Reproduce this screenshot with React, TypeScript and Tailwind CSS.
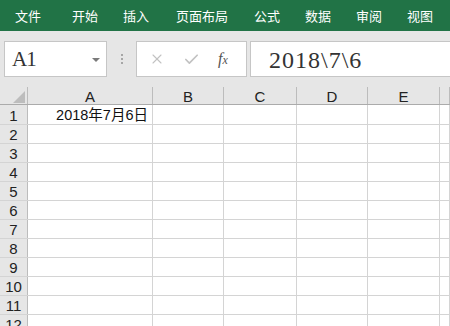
import { X, Check } from "lucide-react";

const menus = [
  { label: "文件", ml: "ml-[15px]" },
  { label: "开始", ml: "ml-[31px]" },
  { label: "插入", ml: "ml-[25px]" },
  { label: "页面布局", ml: "ml-[27px]" },
  { label: "公式", ml: "ml-[26px]" },
  { label: "数据", ml: "ml-[25px]" },
  { label: "审阅", ml: "ml-[25px]" },
  { label: "视图", ml: "ml-[25px]" },
];

const cols = [
  { name: "A", w: "w-[125px]" },
  { name: "B", w: "w-[71px]" },
  { name: "C", w: "w-[73px]" },
  { name: "D", w: "w-[71px]" },
  { name: "E", w: "w-[72px]" },
  { name: "", w: "flex-1" },
];

const rows = [1, 2, 3, 4, 5, 6, 7, 8, 9, 10, 11, 12];

const sans = "font-['Liberation_Sans','Noto_Sans_CJK_SC',sans-serif]";

const App = () => {
  return (
    <div className="w-[450px] h-[326px] overflow-hidden bg-white flex flex-col">
      {/* ribbon tabs */}
      <div className="h-[31px] shrink-0 bg-[#217346] flex items-center text-white text-[13px] font-['Noto_Sans_CJK_SC',sans-serif]">
        {menus.map((m) => (
          <span key={m.label} className={`${m.ml} whitespace-nowrap`}>
            {m.label}
          </span>
        ))}
      </div>

      {/* formula bar */}
      <div className="h-[56px] shrink-0 bg-[#e6e6e6] flex items-start pt-[10px] pl-[4px]">
        <div className="w-[103px] h-[36px] bg-white border border-[#c6c6c6] flex items-center justify-between pl-[7px] pr-[6px]">
          <span className="text-[21px] tracking-[-1px] text-[#333] font-['Liberation_Serif',serif] pt-[2px]">A1</span>
          <svg width="8" height="5" viewBox="0 0 8 5" className="mt-[2px]">
            <polygon points="0,0 8,0 4,4" fill="#7a7a7a" />
          </svg>
        </div>
        <div className="w-[29px] h-[36px] flex flex-col items-center justify-center gap-[2px]">
          <span className="w-[2px] h-[2px] bg-[#a6a6a6]" />
          <span className="w-[2px] h-[2px] bg-[#a6a6a6]" />
          <span className="w-[2px] h-[2px] bg-[#a6a6a6]" />
        </div>
        <div className="w-[111px] h-[36px] bg-white border border-[#c6c6c6] flex items-center pl-[12px]">
          <X className="w-[16px] h-[16px] text-[#c2c2c2]" strokeWidth={1.6} />
          <Check className="w-[17px] h-[17px] ml-[18px] text-[#c2c2c2]" strokeWidth={2.4} />
          <span className="ml-[18px] text-[16px] italic text-[#555] font-['Liberation_Serif',serif] leading-none">
            f<span className="text-[12px]">x</span>
          </span>
        </div>
        <div className="flex-1 h-[36px] ml-[3px] -mr-[2px] bg-white border border-[#c6c6c6] flex items-center pl-[18px]">
          <span className="text-[24px] tracking-[1px] text-[#333] font-['Liberation_Serif',serif] pt-[2px]">
            2018\7\6
          </span>
        </div>
      </div>

      {/* column headers */}
      <div className={`h-[18px] shrink-0 flex bg-[#e6e6e6] border-b border-[#ababab] text-[15px] text-[#222] ${sans}`}>
        <div className="w-[28px] shrink-0 border-r border-[#bcbcbc] flex items-end justify-end pr-[2px] pb-[1px]">
          <svg width="12" height="12" viewBox="0 0 12 12">
            <polygon points="12,0 12,12 0,12" fill="#bdbdbd" />
          </svg>
        </div>
        {cols.map((c, i) => (
          <div
            key={i}
            className={`${c.w} shrink-0 border-r border-[#bcbcbc] flex items-center justify-center leading-none pt-[1px]`}
          >
            {c.name}
          </div>
        ))}
      </div>

      {/* grid */}
      {rows.map((r) => (
        <div
          key={r}
          className={`${r === 1 ? "h-[20px]" : "h-[19px]"} shrink-0 flex border-b border-[#d4d4d4] ${sans}`}
        >
          <div className="w-[28px] shrink-0 bg-[#e6e6e6] border-r border-[#bcbcbc] flex items-end justify-center text-[15px] leading-[15px] pb-[1px] text-[#222]">
            {r}
          </div>
          {cols.map((c, i) => (
            <div
              key={i}
              className={`${c.w} shrink-0 border-r border-[#d4d4d4] flex items-end justify-end pr-[4px] pb-[1px] text-[14.5px] leading-[15px] text-[#111]`}
            >
              {r === 1 && i === 0 ? "2018年7月6日" : ""}
            </div>
          ))}
        </div>
      ))}
    </div>
  );
};

export default App;
